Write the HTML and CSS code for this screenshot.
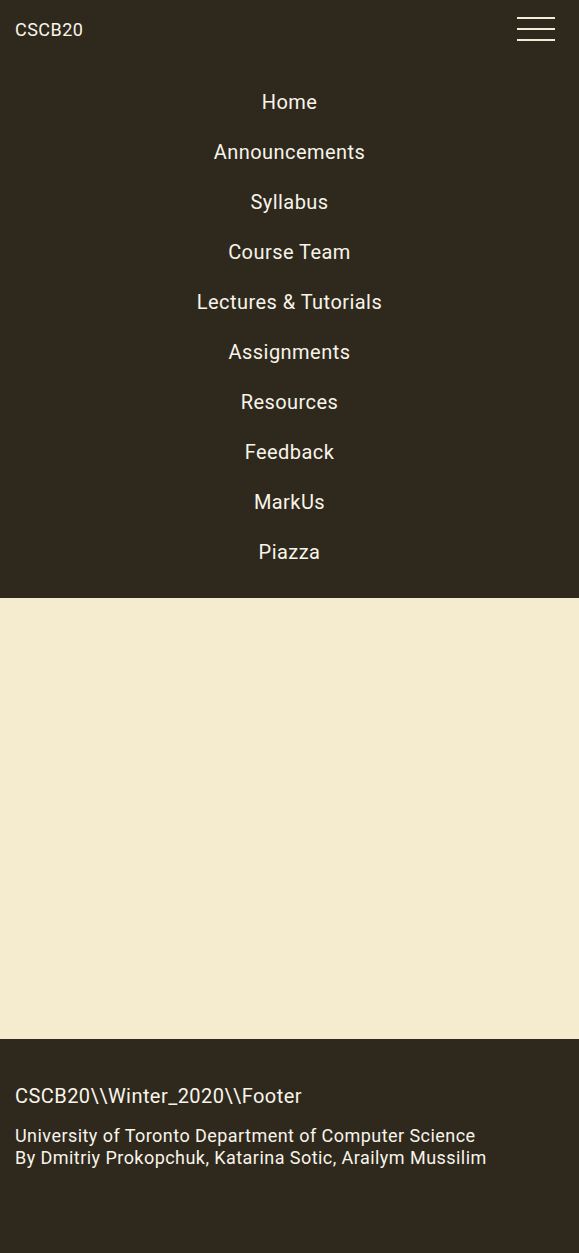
FILE: index.html
```html
<!DOCTYPE html>
<html lang="en">
<head>
<meta charset="utf-8">
<title>CSCB20</title>
<link rel="stylesheet" href="styles.css">
</head>
<body>
<header class="topbar">
  <div class="brand">CSCB20</div>
  <button class="burger" aria-label="Menu">
    <span class="burger-line"></span>
    <span class="burger-line"></span>
    <span class="burger-line"></span>
  </button>
</header>
<nav class="menu">
  <a class="menu-item" href="#">Home</a>
  <a class="menu-item" href="#">Announcements</a>
  <a class="menu-item" href="#">Syllabus</a>
  <a class="menu-item" href="#">Course Team</a>
  <a class="menu-item" href="#">Lectures &amp; Tutorials</a>
  <a class="menu-item" href="#">Assignments</a>
  <a class="menu-item" href="#">Resources</a>
  <a class="menu-item" href="#">Feedback</a>
  <a class="menu-item" href="#">MarkUs</a>
  <a class="menu-item" href="#">Piazza</a>
</nav>
<main class="content"></main>
<footer class="footer">
  <div class="footer-title">CSCB20\\Winter_2020\\Footer</div>
  <div class="footer-text">University of Toronto Department of Computer Science<br>By Dmitriy Prokopchuk, Katarina Sotic, Arailym Mussilim</div>
</footer>
</body>
</html>
```
FILE: styles.css
```css
html {
  background: #2f291d;
}
body {
  margin: 0;
  font-family: Roboto, "Liberation Sans", sans-serif;
  color: #f8f4ea;
  background: #2f291d;
  letter-spacing: 0.45px;
}
.topbar {
  height: 57px;
  display: flex;
  align-items: center;
  justify-content: space-between;
  padding: 0 24px 0 15px;
}
.brand {
  font-size: 18px;
  line-height: 22px;
  margin-top: 2px;
}
.burger {
  background: none;
  border: 0;
  padding: 0;
  width: 38px;
  display: flex;
  flex-direction: column;
  gap: 9px;
}
.burger-line {
  display: block;
  height: 2px;
  width: 38px;
  background: #f3ecd8;
}
.menu {
  display: flex;
  flex-direction: column;
  align-items: center;
  padding: 20px 0 21px;
}
.menu-item {
  color: #f8f4ea;
  text-decoration: none;
  font-size: 20px;
  line-height: 50px;
  height: 50px;
}
.content {
  display: block;
  height: 441px;
  background: #f5ecd0;
}
.footer {
  min-height: 214px;
  box-sizing: border-box;
  padding: 45px 15px 0;
}
.footer-title {
  font-size: 20px;
  line-height: 24px;
}
.footer-text {
  margin-top: 17px;
  font-size: 18px;
  line-height: 22px;
}
```
